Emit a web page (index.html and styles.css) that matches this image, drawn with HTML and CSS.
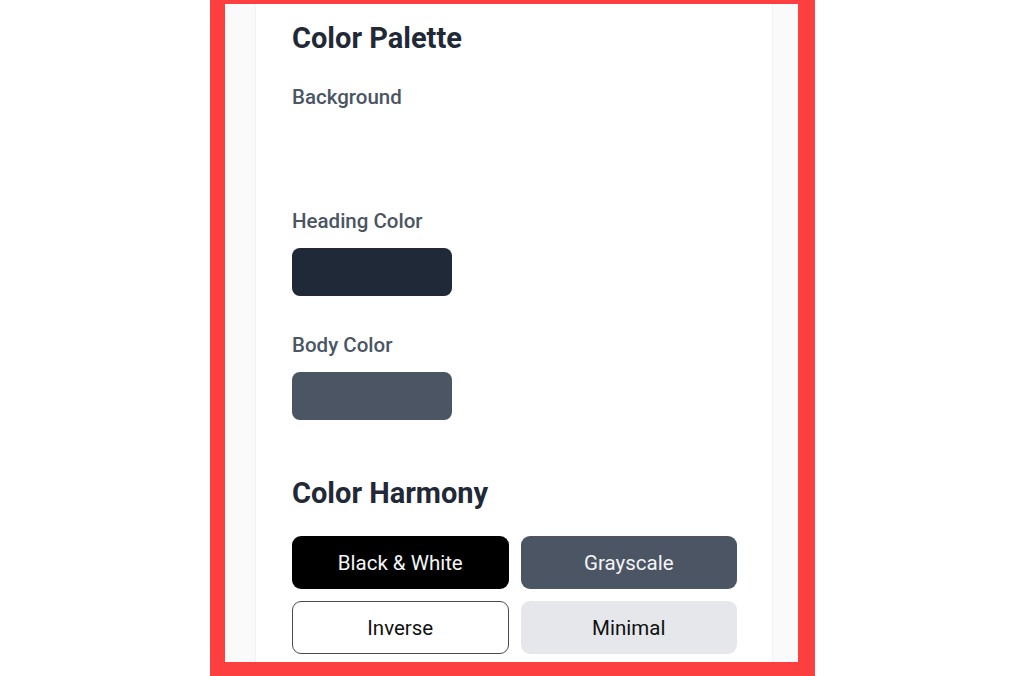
FILE: index.html
```html
<!DOCTYPE html>
<html lang="en">
<head>
    <meta charset="UTF-8">
    <meta name="viewport" content="width=device-width, initial-scale=1.0">
    <title>Color Settings</title>
    <link rel="stylesheet" href="styles.css">
</head>
<body>
    <div class="frame">
        <div class="panel">
            <section class="palette">
                <h2>Color Palette</h2>
                <div class="color-group">
                    <label>Background</label>
                    <div class="swatch swatch-bg"></div>
                </div>
                <div class="color-group">
                    <label>Heading Color</label>
                    <div class="swatch swatch-heading"></div>
                </div>
                <div class="color-group">
                    <label>Body Color</label>
                    <div class="swatch swatch-body"></div>
                </div>
            </section>
            <section class="harmony">
                <h2>Color Harmony</h2>
                <div class="harmony-grid">
                    <button class="btn-bw">Black &amp; White</button>
                    <button class="btn-gray">Grayscale</button>
                    <button class="btn-inverse">Inverse</button>
                    <button class="btn-minimal">Minimal</button>
                </div>
            </section>
        </div>
    </div>
</body>
</html>
```

FILE: styles.css
```css
body {
  font-family: Roboto, "Liberation Sans", sans-serif;
  margin: 0;
  padding: 0;
  background-color: #fff;
  height: 676px;
  overflow: hidden;
}
/* Red outline round the screen */
.frame {
  width: 518px;
  margin-left: 210px;
  border: solid #fe3f3f;
  border-width: 4px 17px 20px 15px;
  background-color: #fafafa;
  padding: 0 25px 0 30px;
}
.panel {
  background-color: #fff;
  border-left: 1px solid #f2f3f5;
  border-right: 1px solid #f2f3f5;
  padding: 16px 35px 8px 36px;
}
.panel h2 {
  margin: 0;
  font-size: 29px;
  line-height: 36px;
  font-weight: 700;
  color: #1f2937;
}
/* Color Palette */
.palette h2 {
  margin-bottom: 31px;
}
.color-group {
  margin-bottom: 39px;
}
.color-group label {
  display: block;
  font-size: 20.5px;
  line-height: 20px;
  font-weight: 500;
  color: #4b5563;
  margin-bottom: 17px;
}
.swatch {
  width: 160px;
  height: 48px;
  border-radius: 8px;
}
.swatch-bg {
  background-color: #fff;
}
.swatch-heading {
  background-color: #1f2937;
}
.swatch-body {
  background-color: #4b5563;
}
/* Color Harmony */
.harmony {
  margin-top: 55px;
}
.harmony h2 {
  margin-bottom: 25px;
}
.harmony-grid {
  display: grid;
  grid-template-columns: 1fr 1fr;
  gap: 12px;
}
.harmony-grid button {
  height: 53px;
  border: none;
  border-radius: 9px;
  font-family: Roboto, "Liberation Sans", sans-serif;
  font-size: 20.5px;
  cursor: pointer;
}
.btn-bw {
  background-color: #000;
  color: #f3f4f6;
}
.btn-gray {
  background-color: #4b5563;
  color: #f3f4f6;
}
.btn-inverse {
  background-color: #fff;
  color: #111;
  border: 1.5px solid #4b4b4b !important;
}
.btn-minimal {
  background-color: #e5e7eb;
  color: #111;
}
```
